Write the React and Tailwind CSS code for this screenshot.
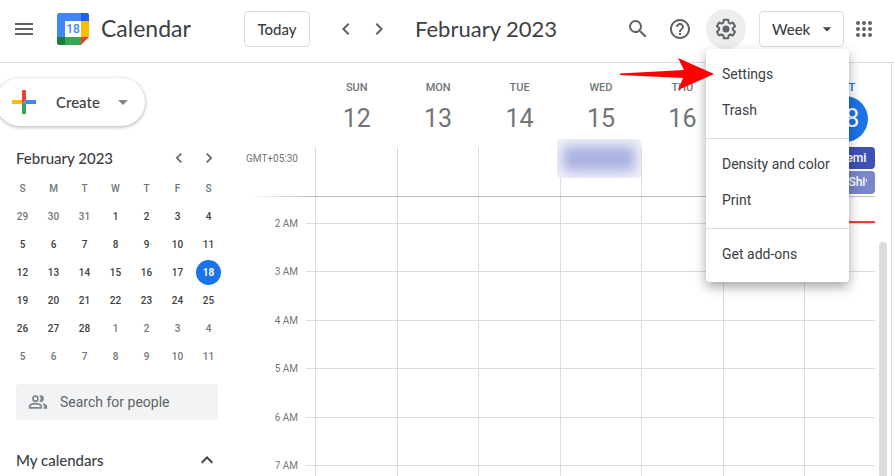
import React from "react";
import {
  MdMenu,
  MdChevronLeft,
  MdChevronRight,
  MdSearch,
  MdHelpOutline,
  MdArrowDropDown,
  MdExpandLess,
} from "react-icons/md";

const days = [
  { name: "SUN", date: 12 },
  { name: "MON", date: 13 },
  { name: "TUE", date: 14 },
  { name: "WED", date: 15 },
  { name: "THU", date: 16 },
  { name: "FRI", date: 17 },
  { name: "SAT", date: 18 },
];

const weeks = [
  [29, 30, 31, 1, 2, 3, 4],
  [5, 6, 7, 8, 9, 10, 11],
  [12, 13, 14, 15, 16, 17, 18],
  [19, 20, 21, 22, 23, 24, 25],
  [26, 27, 28, 1, 2, 3, 4],
  [5, 6, 7, 8, 9, 10, 11],
];

const menuGroups = [["Settings", "Trash"], ["Density and color", "Print"], ["Get add-ons"]];

const Logo = () => (
  <svg viewBox="0 0 32 32" className="size-8 shrink-0" aria-hidden="true">
    <path d="M2 0h22v8H8v16H0V2a2 2 0 0 1 2-2z" fill="#4285f4" />
    <path d="M24 0h6a2 2 0 0 1 2 2v6h-8z" fill="#1967d2" />
    <path d="M24 8h8v16h-8z" fill="#fbbc04" />
    <path d="M8 24h16v8H8z" fill="#34a853" />
    <path d="M0 24h8v8H2a2 2 0 0 1-2-2z" fill="#188038" />
    <path d="M24 24h8l-8 8z" fill="#ea4335" />
    <path d="M8 8h16v16H8z" fill="#fff" />
    <text x="16" y="20" textAnchor="middle" fontFamily="Roboto, sans-serif" fontSize="12" fontWeight="500" fill="#4285f4">18</text>
  </svg>
);

const Plus = () => (
  <svg viewBox="0 0 24 24" className="size-6 shrink-0" aria-hidden="true">
    <path d="M10 0h4v10l-4 4z" fill="#ea4335" />
    <path d="M0 10h10v4H0z" fill="#fbbc04" />
    <path d="M10 14l2-2 2 2v10h-4z" fill="#34a853" />
    <path d="M14 10h10v4H14l-2-2z" fill="#4285f4" />
  </svg>
);

const Gear = () => (
  <svg viewBox="0 0 24 24" className="size-6" fill="currentColor" aria-hidden="true">
    <path d="M13.850 22.250h-3.700c-.74 0-1.360-.54-1.450-1.270l-.27-1.890c-.27-.14-.53-.29-.79-.46l-1.800.72c-.7.260-1.470-.03-1.810-.65L2.200 15.530c-.35-.66-.2-1.440.36-1.880l1.530-1.190c-.01-.15-.02-.3-.02-.46 0-.15.010-.31.020-.46l-1.520-1.190c-.59-.45-.74-1.260-.37-1.880l1.850-3.190c.34-.62 1.110-.9 1.790-.63l1.810.73c.26-.17.520-.32.780-.46l.27-1.910c.09-.7.710-1.250 1.440-1.250h3.700c.74 0 1.360.54 1.450 1.270l.27 1.890c.27.140.53.290.79.460l1.800-.72c.71-.26 1.480.03 1.820.650l1.840 3.180c.36.660.2 1.440-.36 1.880l-1.520 1.190c.01.150.020.300.020.460s-.01.310-.02.460l1.520 1.190c.56.450.72 1.230.37 1.860l-1.860 3.220c-.34.620-1.110.9-1.800.630l-1.800-.72c-.26.170-.52.320-.78.460l-.27 1.910c-.1.680-.72 1.220-1.460 1.220zm-3.230-2h2.760l.37-2.550.53-.22c.44-.18.880-.44 1.340-.78l.45-.34 2.380.96 1.380-2.400-2.030-1.580.07-.56c.03-.26.060-.51.060-.78s-.03-.53-.06-.78l-.07-.56 2.030-1.580-1.390-2.400-2.390.960-.45-.35c-.42-.32-.87-.58-1.330-.77l-.52-.22-.37-2.550h-2.760l-.37 2.550-.53.210c-.44.190-.88.440-1.340.790l-.45.330-2.380-.95-1.390 2.390 2.030 1.580-.07.560a7 7 0 0 0-.06.790c0 .260.020.530.060.780l.07.560-2.030 1.580 1.380 2.400 2.390-.96.450.350c.43.330.86.580 1.330.770l.53.220.38 2.550z" />
    <circle cx="12" cy="12" r="3.500" />
  </svg>
);

const People = () => (
  <svg viewBox="0 0 24 24" className="size-5 shrink-0 text-[#80868b]" fill="currentColor" aria-hidden="true">
    <path d="M9 4a4 4 0 1 0 0 8 4 4 0 0 0 0-8zm0 2a2 2 0 1 1 0 4 2 2 0 0 1 0-4zM9 13c-2.670 0-8 1.340-8 4v3h16v-3c0-2.660-5.330-4-8-4zm6 5H3v-.99C3.200 16.290 6.300 15 9 15s5.800 1.290 6 2v1z" />
    <path d="M15 4c-.47 0-.91.100-1.330.240a5.980 5.980 0 0 1 0 7.520c.42.140.86.240 1.330.240a4 4 0 0 0 0-8zM16.670 13.130C18.040 14.060 19 15.320 19 17v3h4v-3c0-2.180-3.580-3.470-6.330-3.870z" />
  </svg>
);

const Apps = () => (
  <svg viewBox="0 0 24 24" className="size-6" fill="currentColor" aria-hidden="true">
    {[6, 12, 18].map((y) => [6, 12, 18].map((x) => <circle key={`${x}-${y}`} cx={x} cy={y} r="2" />))}
  </svg>
);

const SettingsMenu = () => (
  <div role="menu" className="absolute left-0 top-full z-20 w-[143px] rounded bg-white font-['Roboto',sans-serif] text-sm text-[#3c4043] shadow-[0_5px_12px_rgba(0,0,0,0.35)]">
    {menuGroups.map((group) => (
      <div key={group[0]} className="border-b border-[#dadce0] pt-[7px] pb-[10px] last:border-0">
        {group.map((item) => (
          <button key={item} role="menuitem" className="flex h-9 w-full items-center whitespace-nowrap px-4">
            {item}
          </button>
        ))}
      </div>
    ))}
  </div>
);

const Header = () => (
  <header className="flex h-[63px] shrink-0 items-center border-b border-[#dadce0] pr-[18px] pb-1 text-[#5f6368]">
    <div className="flex w-[244px] shrink-0 items-center pl-3">
      <button aria-label="Main menu"><MdMenu className="size-6" /></button>
      <div className="ml-[21px] flex items-center gap-3">
        <Logo />
        <span className="pb-0.5 text-[23px] text-[#3c4043]">Calendar</span>
      </div>
    </div>
    <button className="h-9 w-[66px] shrink-0 rounded border border-[#dadce0] text-[15px] font-medium text-[#3c4043]">Today</button>
    <div className="ml-6 flex shrink-0 gap-[9px]">
      <button aria-label="Previous week"><MdChevronLeft className="size-6" /></button>
      <button aria-label="Next week"><MdChevronRight className="size-6" /></button>
    </div>
    <h1 className="ml-6 whitespace-nowrap pb-0.5 text-[22px] text-[#3c4043]">February 2023</h1>
    <div className="ml-auto flex shrink-0 items-center">
      <button aria-label="Search"><MdSearch className="size-6" /></button>
      <button aria-label="Help" className="ml-[18px]"><MdHelpOutline className="size-6" /></button>
      <div className="relative ml-3.5">
        <button aria-label="Settings menu" aria-expanded="true" className="flex size-10 items-center justify-center rounded-full bg-[#eceeed]">
          <Gear />
        </button>
        <SettingsMenu />
        <svg viewBox="0 0 94 34" className="absolute top-full right-8 z-30 mt-2 h-[34px] w-[94px]" aria-hidden="true">
          <path d="M0 16.500L64 13L58 1L94 17L58 33L63 21L0 18z" fill="#fe0000" />
        </svg>
      </div>
      <button className="ml-[13px] flex h-9 w-[85px] items-center justify-between rounded border border-[#dadce0] pr-1.5 pl-3 text-[15px] font-medium text-[#3c4043]">
        Week
        <MdArrowDropDown className="size-5" />
      </button>
      <button aria-label="Apps" className="ml-2"><Apps /></button>
    </div>
  </header>
);

const MiniCalendar = () => (
  <section>
    <div className="flex h-6 items-center pr-[11px] pl-4 text-[#5f6368]">
      <h2 className="mr-auto text-[15px] font-medium text-[#3c4043]">February 2023</h2>
      <button aria-label="Previous month"><MdChevronLeft className="size-5" /></button>
      <button aria-label="Next month" className="ml-2.5"><MdChevronRight className="size-5" /></button>
    </div>
    <table className="mt-1 ml-[7px] w-[217px] table-fixed text-center font-['Roboto',sans-serif] text-[10px] font-medium text-[#3c4043]">
      <thead>
        <tr className="h-7 text-[#70757a]">
          {days.map((d) => (
            <th key={d.name} className="p-0 font-medium">{d.name[0]}</th>
          ))}
        </tr>
      </thead>
      <tbody>
        {weeks.map((week, w) => (
          <tr key={w} className="h-7">
            {week.map((n, i) => {
              const outside = (w === 0 && n > 20) || (w > 3 && n < 20);
              const today = w === 2 && n === 18;
              return (
                <td key={i} className={outside ? "p-0 text-[#70757a]" : "p-0"}>
                  {today ? (
                    <span className="mx-auto flex size-[25px] items-center justify-center rounded-full bg-[#1a73e8] font-bold text-white">{n}</span>
                  ) : n}
                </td>
              );
            })}
          </tr>
        ))}
      </tbody>
    </table>
  </section>
);

const Sidebar = () => (
  <aside className="w-[230px] shrink-0 pt-[15px]">
    <button className="-ml-1 mb-5 flex h-12 w-[149px] items-center rounded-full bg-white pl-4 text-[15px] font-medium text-[#3c4043] shadow-[0_1px_3px_1px_rgba(60,64,67,0.28)]">
      <Plus />
      <span className="ml-5">Create</span>
      <MdArrowDropDown className="mr-2.5 ml-auto size-6 text-[#80868b]" />
    </button>
    <MiniCalendar />
    <label className="mt-[14px] mr-3 ml-4 flex h-9 items-center gap-3 rounded bg-[#f1f3f4] pl-3">
      <People />
      <input
        type="text"
        placeholder="Search for people"
        aria-label="Search for people"
        className="w-full min-w-0 bg-transparent font-['Roboto',sans-serif] text-sm outline-none placeholder:text-[#5f6368]"
      />
    </label>
    <button className="mt-[26px] flex h-7 w-full items-center justify-between pr-[11px] pl-4 text-[15px] font-medium text-[#3c4043]">
      My calendars
      <MdExpandLess className="size-6" />
    </button>
  </aside>
);

const HourRow = ({ label, className }) => (
  <div className={`flex ${className}`}>
    <div className="flex w-[52px] shrink-0 items-end justify-end">
      <span className="translate-y-1/2 leading-3">{label}</span>
    </div>
    <div className="ml-2 w-[9px] shrink-0 border-b border-[#dadce0]" />
    <div className="grid flex-1 grid-cols-7">
      {days.map((d) => (
        <div key={d.name} className="border-b border-l border-[#dadce0] last:mr-[11px]" />
      ))}
    </div>
  </div>
);

const WeekView = () => (
  <main className="relative mr-0.5 flex min-w-0 flex-1 flex-col border-r border-[#dadce0] pr-[5px] pl-4 font-['Roboto',sans-serif] text-[10px] text-[#70757a]">
    <div className="grid h-[84px] shrink-0 grid-cols-7 pl-[70px]">
      {days.map((d) => (
        <div key={d.name} className={`flex flex-col items-center pt-[17px] ${d.date === 18 ? "text-[#1a73e8]" : ""}`}>
          <span className="text-[11px] leading-4 font-medium">{d.name}</span>
          <span className={`flex size-[46px] shrink-0 items-center justify-center rounded-full text-[25px] ${d.date === 18 ? "bg-[#1a73e8] text-white" : ""}`}>
            {d.date}
          </span>
        </div>
      ))}
    </div>

    {/* All-day events */}
    <div className="flex h-[49px] shrink-0">
      <span className="w-[69px] shrink-0 whitespace-nowrap pt-1">GMT+05:30</span>
      <div className="grid flex-1 grid-cols-7">
        {days.map((d) => (
          <div key={d.name} className="relative border-l border-[#dadce0]">
            {d.date === 15 && (
              <div className="absolute -top-2 -left-1 h-[39px] w-[84px] overflow-hidden rounded bg-[#eff0f9]">
                <div className="mx-1.5 my-[7px] h-[25px] rounded bg-[#a9b1df] blur-[6px]" />
              </div>
            )}
            {d.date === 18 && (
              <div className="mr-[11px] flex flex-col gap-0.5 text-xs font-medium text-white">
                <div className="h-[22px] rounded bg-[#3f51b5] pr-2 pl-[41px] leading-[22px]"><p className="overflow-hidden">emin</p></div>
                <div className="h-[23px] rounded bg-[#7986cb] pr-2 pl-[43px] leading-[22px]"><p className="overflow-hidden">Shiv</p></div>
              </div>
            )}
          </div>
        ))}
      </div>
    </div>
    <div className="mr-[11px] h-px shrink-0 bg-linear-to-r from-transparent via-[#c0c1c3] via-10% to-[#c0c1c3]" />

    {/* Hours */}
    <div className="relative flex flex-1 flex-col">
      <HourRow label="2 AM" className="h-[27px] shrink-0" />
      <div className="grid h-[242px] shrink-0 grid-rows-5">
        {["3 AM", "4 AM", "5 AM", "6 AM", "7 AM"].map((h) => (
          <HourRow key={h} label={h} className="" />
        ))}
      </div>
      <HourRow className="h-12 shrink-0" />
      <div className="absolute top-6 right-[11px] h-0.5 w-[70px] bg-[#ea4335]" />
      <div className="absolute top-[45px] -right-px bottom-0 w-2 rounded-t bg-[#dadce0]" />
    </div>
  </main>
);

export default function App() {
  return (
    <div className="flex h-screen flex-col overflow-hidden bg-white font-['Lato',sans-serif]">
      <Header />
      <div className="flex min-h-0 flex-1">
        <Sidebar />
        <WeekView />
      </div>
    </div>
  );
}
